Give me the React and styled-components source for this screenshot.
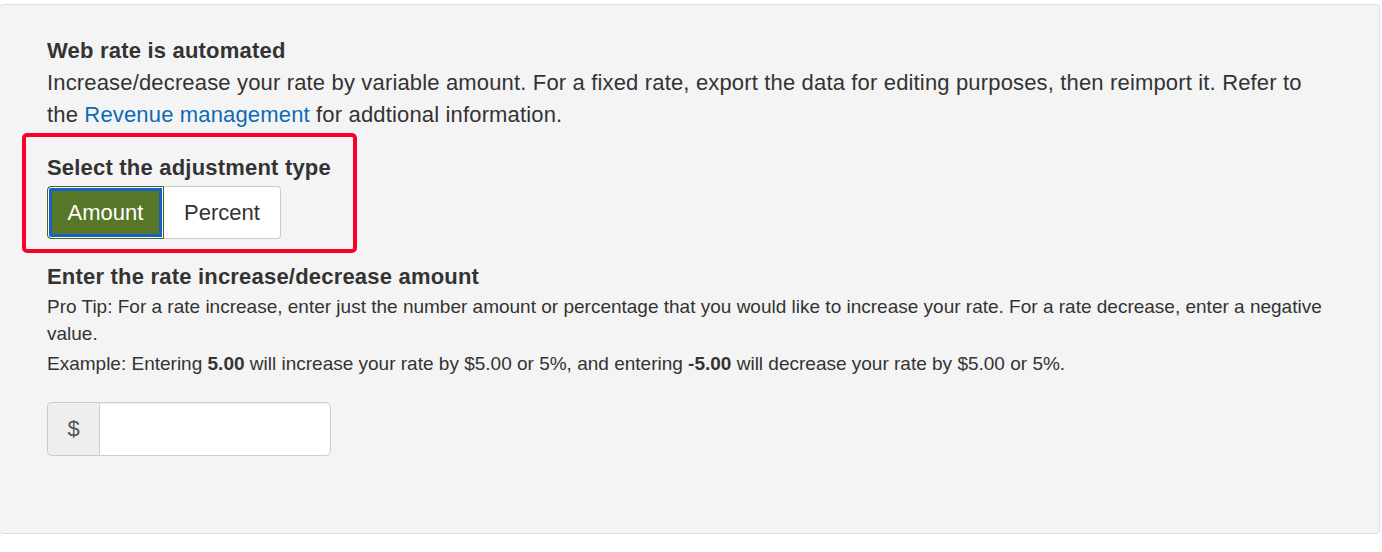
import React, { useState } from "react";
import styled, { createGlobalStyle } from "styled-components";

const GlobalStyle = createGlobalStyle`
  body {
    margin: 0;
    background: #ffffff;
    font-family: "Liberation Sans", Arial, Helvetica, sans-serif;
    color: #333333;
  }
`;

const Panel = styled.div`
  margin: 4px 0 0 -1px;
  width: 1381px;
  height: 530px;
  box-sizing: border-box;
  background: #f4f4f4;
  border: 1px solid #dddddd;
  border-radius: 4px;
  padding: 30px 40px 0 47px;
`;

const Heading = styled.h3`
  margin: 0;
  font-size: 22px;
  letter-spacing: 0.2px;
  line-height: 32px;
  font-weight: bold;
  color: #333333;
`;

const Lead = styled.p`
  margin: 0;
  max-width: 1270px;
  font-size: 22px;
  letter-spacing: 0.16px;
  line-height: 32px;
`;

const Link = styled.a`
  color: #0d6bb5;
  text-decoration: none;
`;

const Highlight = styled.div`
  display: inline-block;
  margin: 2px 0 0 -25px;
  padding: 15px 22px 10px 21px;
  border: 4px solid #f8002a;
  border-radius: 5px;
`;

const ToggleGroup = styled.div`
  display: flex;
  margin-top: 2px;
  width: 234px;
`;

const Toggle = styled.button`
  width: 117px;
  height: 53px;
  box-sizing: border-box;
  font-family: inherit;
  font-size: 22px;
  cursor: pointer;
  border: 1px solid ${(p) => (p.$active ? "#4b6622" : "#cccccc")};
  background: ${(p) => (p.$active ? "#587628" : "#ffffff")};
  color: ${(p) => (p.$active ? "#ffffff" : "#333333")};
  box-shadow: ${(p) => (p.$active ? "inset 0 0 0 1px #ffffff, inset 0 0 0 4px #1462c8" : "none")};
  border-radius: ${(p) => (p.$first ? "4px 0 0 4px" : "0 4px 4px 0")};
  ${(p) => (p.$first ? "" : "border-left: none;")}
  padding: 0;
  outline: none;
`;

const SubHeading = styled(Heading)`
  margin-top: 8px;
`;

const Hint = styled.p`
  margin: 0 0 3px;
  font-size: 19px;
  line-height: 27px;
`;

const InputGroup = styled.div`
  display: flex;
  margin-top: 25px;
  width: 284px;
  height: 54px;
`;

const Addon = styled.span`
  display: flex;
  align-items: center;
  justify-content: center;
  width: 52px;
  box-sizing: border-box;
  background: #eeeeee;
  border: 1px solid #cccccc;
  border-right: none;
  border-radius: 5px 0 0 5px;
  font-size: 22px;
  color: #555555;
`;

const Field = styled.input`
  flex: 1;
  min-width: 0;
  box-sizing: border-box;
  border: 1px solid #cccccc;
  border-radius: 0 5px 5px 0;
  background: #ffffff;
  font-family: inherit;
  font-size: 20px;
  padding: 0 12px;
  box-shadow: inset 0 1px 1px rgba(0, 0, 0, 0.06);
  outline: none;
`;

export default function App() {
  const [type, setType] = useState("amount");
  const [value, setValue] = useState("");

  return (
    <>
      <GlobalStyle />
      <Panel>
        <Heading>Web rate is automated</Heading>
        <Lead>
          Increase/decrease your rate by variable amount. For a fixed rate, export the data for editing
          purposes, then reimport it. Refer to the <Link href="#">Revenue management</Link> for addtional
          information.
        </Lead>

        <Highlight>
          <Heading>Select the adjustment type</Heading>
          <ToggleGroup>
            <Toggle $first $active={type === "amount"} onClick={() => setType("amount")}>
              Amount
            </Toggle>
            <Toggle $active={type === "percent"} onClick={() => setType("percent")}>
              Percent
            </Toggle>
          </ToggleGroup>
        </Highlight>

        <SubHeading>Enter the rate increase/decrease amount</SubHeading>
        <Hint>
          Pro Tip: For a rate increase, enter just the number amount or percentage that you would like to
          increase your rate. For a rate decrease, enter a negative value.
        </Hint>
        <Hint>
          Example: Entering <b>5.00</b> will increase your rate by $5.00 or 5%, and entering <b>-5.00</b> will
          decrease your rate by $5.00 or 5%.
        </Hint>

        <InputGroup>
          <Addon>{type === "amount" ? "$" : "%"}</Addon>
          <Field value={value} onChange={(e) => setValue(e.target.value)} />
        </InputGroup>
      </Panel>
    </>
  );
}
